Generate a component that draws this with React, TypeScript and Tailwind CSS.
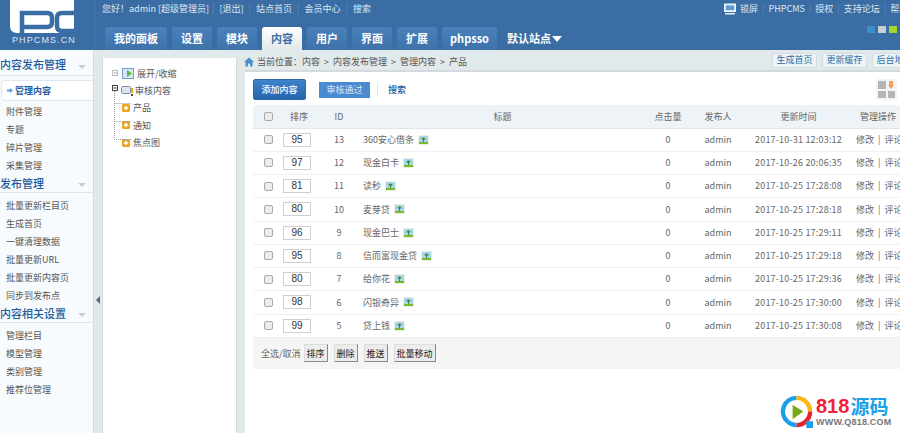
const font = "[font-family:'Noto_Sans_CJK_SC','Liberation_Sans',sans-serif]";

const rows = [
  { order: 95, id: 13, title: "360安心借条", time: "2017-10-31 12:03:12" },
  { order: 97, id: 12, title: "现金白卡", time: "2017-10-26 20:06:35" },
  { order: 81, id: 11, title: "读秒", time: "2017-10-25 17:28:08" },
  { order: 80, id: 10, title: "麦芽贷", time: "2017-10-25 17:28:18" },
  { order: 96, id: 9, title: "现金巴士", time: "2017-10-25 17:29:11" },
  { order: 95, id: 8, title: "信而富现金贷", time: "2017-10-25 17:29:18" },
  { order: 80, id: 7, title: "给你花", time: "2017-10-25 17:29:36" },
  { order: 98, id: 6, title: "闪银奇异", time: "2017-10-25 17:30:00" },
  { order: 99, id: 5, title: "贷上钱", time: "2017-10-25 17:30:08" },
];

const tabs = ["我的面板", "设置", "模块", "内容", "用户", "界面", "扩展", "phpsso"];

const menus = [
  { title: "内容发布管理", items: ["管理内容", "附件管理", "专题", "碎片管理", "采集管理"] },
  { title: "发布管理", items: ["批量更新栏目页", "生成首页", "一键清理数据", "批量更新URL", "批量更新内容页", "同步到发布点"] },
  { title: "内容相关设置", items: ["管理栏目", "模型管理", "类别管理", "推荐位管理"] },
];

function Logo() {
  return (
    <div className="relative h-[50px] w-[94px] shrink-0">
      <svg width="94" height="38" viewBox="0 0 94 38" className="block">
        <path d="M10 0H74V33H17Q10 33 10 26Z" fill="#fff" />
        <path d="M22 35V13H47Q52 13 52 18V22Q52 27 47 27H24" fill="none" stroke="#3a6da4" strokeWidth="4.5" />
        <path d="M76 13H62Q57 13 57 18V26Q57 31 62 31H76" fill="none" stroke="#3a6da4" strokeWidth="4.5" />
      </svg>
      <div className="absolute left-[12px] top-[35px] whitespace-nowrap text-[9px] leading-[10px] tracking-[1.1px] text-[#dbe7f3] [font-family:'Liberation_Sans',sans-serif]">
        PHPCMS.CN
      </div>
    </div>
  );
}

function Header() {
  return (
    <header className="flex h-[50px] bg-[#3a6da4]">
      <Logo />
      <div className="flex min-w-0 flex-1 flex-col border-l border-[#4377ad] pl-[7px]">
        <div className="flex h-[26px] items-start justify-between pt-[3px] text-[9px] leading-[12px] text-[#dfe8f2]">
          <div className="flex gap-[5px]">
            <span className="-mr-[2px]">您好！admin [超级管理员]</span>
            <span className="text-[#5f8ab8]">|</span>
            <span>[退出]</span>
            <span className="text-[#5f8ab8]">|</span>
            <span>站点首页</span>
            <span className="text-[#5f8ab8]">|</span>
            <span>会员中心</span>
            <span className="text-[#5f8ab8]">|</span>
            <span>搜索</span>
          </div>
          <div className="flex w-[176px] shrink-0 items-center gap-[4px] overflow-hidden whitespace-nowrap">
            <svg width="12" height="12" viewBox="0 0 12 12" className="shrink-0">
              <rect x="0.5" y="1" width="11" height="7.5" fill="#cfe3f7" stroke="#eef5fb" />
              <rect x="2" y="2.5" width="8" height="4.5" fill="#5b9ad6" />
              <rect x="1" y="10" width="10" height="1.5" fill="#e6edf4" />
            </svg>
            <span>锁屏</span>
            <span className="text-[#5f8ab8]">|</span>
            <span>PHPCMS</span>
            <span className="text-[#5f8ab8]">|</span>
            <span>授权</span>
            <span className="text-[#5f8ab8]">|</span>
            <span>支持论坛</span>
            <span className="text-[#5f8ab8]">|</span>
            <span>帮助</span>
          </div>
        </div>
        <div className="relative flex h-[24px] items-end gap-[5px] pl-[3px]">
          {tabs.map((t) => (
            <div
              key={t}
              className={
                t === "内容"
                  ? "flex h-[23px] w-[40px] items-center justify-center rounded-t-[3px] bg-gradient-to-b from-white to-[#e2e9ea] text-[11px] font-bold text-[#3a6da4]"
                  : t === "phpsso"
                    ? "flex h-[23px] w-[55px] items-center justify-center rounded-t-[3px] bg-gradient-to-b from-[#4a81bb] to-[#3d72aa] text-[11px] font-bold text-white"
                    : t === "我的面板"
                      ? "flex h-[23px] w-[62px] items-center justify-center rounded-t-[3px] bg-gradient-to-b from-[#4a81bb] to-[#3d72aa] text-[11px] font-bold text-white"
                      : "flex h-[23px] w-[40px] items-center justify-center rounded-t-[3px] bg-gradient-to-b from-[#4a81bb] to-[#3d72aa] text-[11px] font-bold text-white"
              }
            >
              {t}
            </div>
          ))}
          <div className="ml-[5px] flex h-[23px] items-center gap-[1px] text-[11px] font-bold text-white">
            默认站点
            <span className="h-0 w-0 border-x-[5px] border-t-[6px] border-x-transparent border-t-white" />
          </div>
          <div className="absolute right-[3px] top-0 flex gap-[3px]">
            <span className="h-[7px] w-[8px] bg-[#3e8fc4]" />
            <span className="h-[7px] w-[8px] bg-[#c9ced2]" />
            <span className="h-[7px] w-[8px] bg-[#a9d22c]" />
          </div>
        </div>
      </div>
    </header>
  );
}

function Sidebar() {
  return (
    <aside className="h-full w-[94px] shrink-0 overflow-hidden border-r border-[#cfdbe2] bg-[#f7fbfd] text-[9px] text-[#555]">
      {menus.map((m, mi) => (
        <div key={m.title}>
          <div
            className={
              mi === 0
                ? "flex h-[26px] items-end justify-between border-b border-[#dbe6ec] pb-[2px] pr-[4px] text-[11px] font-medium leading-[17px] text-[#1f5c9c]"
                : "flex h-[18px] items-end justify-between border-b border-[#dbe6ec] pb-[1px] pr-[4px] text-[11px] font-medium leading-[15px] text-[#1f5c9c]"
            }
          >
            <span>{m.title}</span>
            <span className="mb-[4px] mr-[3px] h-0 w-0 border-x-[4px] border-t-[4px] border-x-transparent border-t-[#c4ced4]" />
          </div>
          <ul className={mi === 0 ? "pt-[4px]" : "pt-[4px]"}>
            {m.items.map((it) =>
              it === "管理内容" ? (
                <li
                  key={it}
                  className="mb-[2px] ml-[1px] flex h-[21px] items-center gap-[2px] rounded-l-[4px] border-y border-l border-[#dfe8ed] bg-white pl-[5px] font-bold text-[#1f5c9c]"
                >
                  <svg width="6" height="5" viewBox="0 0 6 5" className="shrink-0">
                    <path d="M0 1.5H3V0L6 2.5L3 5V3.5H0Z" fill="#5b9ad6" />
                  </svg>
                  {it}
                </li>
              ) : (
                <li key={it} className="flex h-[18px] items-center pl-[6px]">
                  {it}
                </li>
              ),
            )}
          </ul>
        </div>
      ))}
    </aside>
  );
}

function FolderPlus() {
  return (
    <svg width="8" height="8" viewBox="0 0 8 8" className="shrink-0">
      <rect width="8" height="8" rx="1.5" fill="#eda31b" />
      <path d="M4 1.8V6.2M1.8 4H6.2" stroke="#fff" strokeWidth="1.4" />
    </svg>
  );
}

function Tree() {
  return (
    <div className="relative h-full w-[135px] shrink-0 border-x border-[#d4dce1] bg-white text-[9px] text-[#555]">
      <svg width="30" height="90" viewBox="0 0 30 90" className="absolute left-[8px] top-[8px]">
        <path d="M3.5 25V73.5H20M3.5 37.5H20M3.5 55.5H20" fill="none" stroke="#999" strokeDasharray="1 1" />
        <rect x="1.5" y="4.5" width="5" height="5" fill="#fff" stroke="#bbb" />
        <path d="M3 7H5.5" stroke="#888" />
        <rect x="1.5" y="19.5" width="5" height="5" fill="#fff" stroke="#444" />
        <path d="M2.5 22H5.5" stroke="#333" />
      </svg>
      <div className="flex flex-col pl-[18px] pt-[7px]">
        <div className="flex h-[17px] items-center gap-[3px] pl-[1px]">
          <svg width="12" height="11" viewBox="0 0 12 11">
            <rect x="0.5" y="0.5" width="11" height="10" fill="#d4e7f5" stroke="#6f9fc9" />
            <path d="M5 2L10 5.5L5 9Z" fill="#64b33c" />
          </svg>
          展开/收缩
        </div>
        <div className="flex h-[17px] items-center gap-[2px]">
          <svg width="12" height="11" viewBox="0 0 12 11">
            <rect x="0.5" y="1.5" width="9" height="7" rx="1" fill="#dbe6f2" stroke="#7b8fa8" />
            <rect x="10" y="3" width="2" height="5" fill="#e2b21c" />
            <rect x="10" y="9" width="2" height="2" fill="#444" />
          </svg>
          审核内容
        </div>
        {["产品", "通知", "焦点图"].map((t) => (
          <div key={t} className="flex h-[17.5px] items-center gap-[3px] pl-[1px]">
            <FolderPlus />
            {t}
          </div>
        ))}
      </div>
    </div>
  );
}

function Thumb() {
  return (
    <svg width="11" height="10" viewBox="0 0 11 10" className="shrink-0">
      <rect width="11" height="10" fill="#eef1e2" />
      <rect x="1" y="1" width="9" height="6" fill="#a7d4ee" />
      <rect x="1" y="7" width="9" height="2" fill="#7cb82f" />
      <path d="M3.5 4.5a2 2 0 1 1 4 0H6V7H5V4.5Z" fill="#3d8a1c" />
    </svg>
  );
}

function Check() {
  return <span className="mx-auto block h-[9px] w-[9px] rounded-[2px] border border-[#a9a9a9] bg-[#ececec]" />;
}

function Content() {
  return (
    <main className="flex min-w-0 flex-1 flex-col">
      <div className="flex h-[22px] shrink-0 items-center justify-between border-b-2 border-[#d3d9dc] text-[9px] text-[#555]">
        <div className="-ml-[1px] mt-[3px] flex items-center">
          <svg width="10" height="10" viewBox="0 0 10 10" className="mr-[3px]">
            <path d="M5 0.5L0 5H1.5V9.5H4V6.5H6V9.5H8.5V5H10Z" fill="#4a90c8" />
          </svg>
          <span>当前位置：内容</span>
          <span className="mx-[4px]">&gt;</span>
          <span>内容发布管理</span>
          <span className="mx-[4px]">&gt;</span>
          <span>管理内容</span>
          <span className="mx-[4px]">&gt;</span>
          <span>产品</span>
        </div>
        <div className="flex w-[128px] shrink-0 gap-[5px] overflow-hidden">
          {["生成首页", "更新缓存", "后台地图"].map((b) => (
            <span
              key={b}
              className="flex h-[15px] w-[45px] shrink-0 items-center justify-center rounded-[2px] border border-[#d2dde5] bg-[#eef3f6] text-[9px] text-[#2a6ca8]"
            >
              {b}
            </span>
          ))}
        </div>
      </div>
      <div className="min-h-0 flex-1 overflow-hidden bg-white pl-[8px] pt-[7px]">
        <div className="flex h-[26px] items-start">
          <span className="flex h-[21px] w-[53px] items-center justify-center rounded-[2px] border border-[#2e6aa8] bg-gradient-to-b from-[#3f83cc] to-[#2565ad] text-[9px] font-medium text-white">
            添加内容
          </span>
          <span className="ml-[13px] mt-[3px] flex h-[16px] w-[51px] items-center justify-center bg-[#4a8ad0] text-[9px] text-[#dbe9f7]">
            审核通过
          </span>
          <span className="ml-[7px] mt-[4px] h-[13px] w-px bg-[#dfe5e8]" />
          <span className="ml-[10px] mt-[3px] text-[9px] font-medium leading-[16px] text-[#1d5a9c]">搜索</span>
          <div className="ml-auto mr-[3px] grid h-[21px] w-[21px] grid-cols-2 gap-[2px] bg-[#f4f4f4] p-[2px]">
            <span className="bg-[#b5b5b5]" />
            <span className="relative">
              <span className="absolute left-[1px] top-0 h-[4px] w-[4px] bg-[#f0a060]" />
              <span className="absolute left-0 top-[4px] h-0 w-0 border-x-[3px] border-t-[4px] border-x-transparent border-t-[#f0a060]" />
            </span>
            <span className="bg-[#b5b5b5]" />
            <span className="bg-[#b5b5b5]" />
          </div>
        </div>
        <table className="w-[648px] table-fixed border-collapse text-center text-[9px] text-[#666]">
          <colgroup>
            <col className="w-[30px]" />
            <col className="w-[32px]" />
            <col className="w-[48px]" />
            <col className="w-[279px]" />
            <col className="w-[52px]" />
            <col className="w-[48px]" />
            <col className="w-[113px]" />
            <col className="w-[46px]" />
          </colgroup>
          <thead>
            <tr className="h-[23px] border-b border-[#dfe5ea] bg-[#eef3f7]">
              <th className="font-normal"><Check /></th>
              <th className="font-normal">排序</th>
              <th className="font-normal">ID</th>
              <th className="font-normal">标题</th>
              <th className="font-normal">点击量</th>
              <th className="font-normal">发布人</th>
              <th className="font-normal">更新时间</th>
              <th className="font-normal">管理操作</th>
            </tr>
          </thead>
          <tbody>
            {rows.map((r) => (
              <tr key={r.id} className="h-[23.25px] border-b border-[#eef1f3]">
                <td><Check /></td>
                <td className="text-left">
                  <span className="block h-[14px] w-[28px] border border-[#cfcfcf] text-center text-[10px] leading-[12px] text-[#333] [font-family:'Liberation_Sans',sans-serif]">
                    {r.order}
                  </span>
                </td>
                <td>{r.id}</td>
                <td className="text-left">
                  <span className="flex items-center gap-[4px]">
                    {r.title}
                    <Thumb />
                  </span>
                </td>
                <td>0</td>
                <td>admin</td>
                <td className="whitespace-nowrap tracking-[0.2px]">{r.time}</td>
                <td className="whitespace-nowrap pl-[1px] text-left">
                  修改<span className="mx-[4px]">|</span>评论
                </td>
              </tr>
            ))}
          </tbody>
        </table>
        <div className="flex h-[31px] w-[647px] items-center bg-[#f5f5f5] pl-[8px] text-[9px] text-[#666]">
          <span className="mr-[3px]">全选/取消</span>
          {["排序", "删除", "推送", "批量移动"].map((b) => (
            <span
              key={b}
              className={
                b === "批量移动"
                  ? "mr-[6px] flex h-[18px] w-[42px] items-center justify-center border border-[#ddd] border-b-[#888] border-r-[#888] bg-[#ececec] text-[#222]"
                  : "mr-[6px] flex h-[18px] w-[24px] items-center justify-center border border-[#ddd] border-b-[#888] border-r-[#888] bg-[#ececec] text-[#222]"
              }
            >
              {b}
            </span>
          ))}
        </div>
      </div>
    </main>
  );
}

function Watermark() {
  return (
    <div className="absolute bottom-[5px] right-[8px] flex h-[33px] w-[112px] items-start bg-white">
      <svg width="33" height="33" viewBox="0 0 34 34" className="shrink-0">
        <path d="M17 3A14 14 0 0 0 8 27.7" fill="none" stroke="#1b9fe8" strokeWidth="4.5" />
        <path d="M17 3A14 14 0 0 1 31 17" fill="none" stroke="#fbb80f" strokeWidth="4.5" />
        <path d="M31 17A14 14 0 0 1 17 31" fill="none" stroke="#e8202f" strokeWidth="4.5" />
        <path d="M8 27.7A14 14 0 0 0 17 31" fill="none" stroke="#1b9fe8" strokeWidth="4.5" />
        <rect x="27" y="27" width="7" height="7" fill="#1b9fe8" />
        <path d="M13 10L24 17L13 25Z" fill="#7ba817" />
      </svg>
      <div className="ml-[3px] flex flex-col whitespace-nowrap">
        <div className="flex h-[22px] items-center font-bold leading-[20px]">
          <span className="text-[20px] text-[#f0203a] [font-family:'Liberation_Sans',sans-serif]">818</span>
          <span className="ml-[1px] text-[19px] text-[#1b9fe8]">源码</span>
        </div>
        <span className="text-[9px] font-bold leading-[10px] tracking-[0.2px] text-[#777] [font-family:'Liberation_Sans',sans-serif]">WWW.Q818.COM</span>
      </div>
    </div>
  );
}

export default function App() {
  return (
    <div className={`relative flex h-[433px] w-[900px] flex-col overflow-hidden bg-[#e2e9ea] ${font}`}>
      <Header />
      <div className="flex min-h-0 flex-1">
        <Sidebar />
        <div className="relative h-full w-[8px] shrink-0">
          <span className="absolute left-[2px] top-[246px] h-0 w-0 border-y-[4px] border-r-[4px] border-y-transparent border-r-[#667]" />
        </div>
        <div className="h-full pt-[8px]">
          <Tree />
        </div>
        <div className="w-[8px] shrink-0" />
        <Content />
      </div>
      <Watermark />
    </div>
  );
}
